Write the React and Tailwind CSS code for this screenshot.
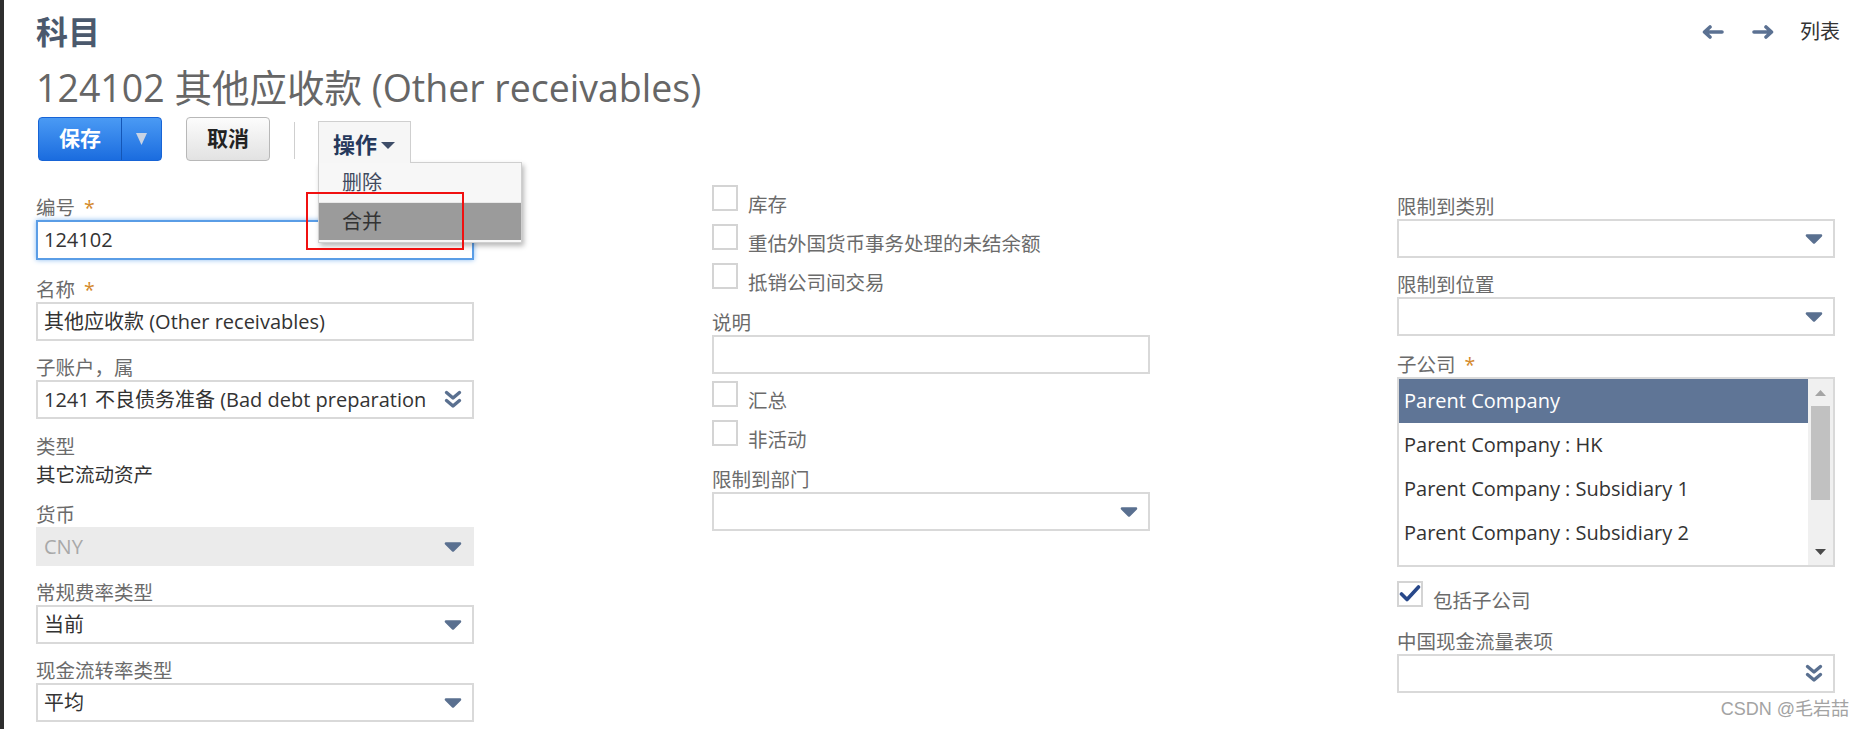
import React from 'react'

const FONT = "font-['Open_Sans','Noto_Sans_CJK_SC',sans-serif]"

function Caret() {
  return (
    <svg width="18" height="10" viewBox="0 0 18 10" className="shrink-0">
      <path d="M2 1.5 H16 L9 8.5 Z" fill="#5a7090" stroke="#5a7090" strokeWidth="2.5" strokeLinejoin="round" />
    </svg>
  )
}

function DoubleChevron() {
  return (
    <svg width="18" height="19" viewBox="0 0 18 19" className="shrink-0">
      <path d="M2.5 2.5 L9 8 L15.5 2.5 M2.5 10.5 L9 16 L15.5 10.5" fill="none" stroke="#5a7090" strokeWidth="3.4" strokeLinecap="round" strokeLinejoin="round" />
    </svg>
  )
}

function Arrow({ dir }) {
  const d = dir === 'left' ? 'M8 2 L2.5 7 L8 12 M3 7 H20' : 'M14 2 L19.5 7 L14 12 M2 7 H19'
  return (
    <svg width="22" height="14" viewBox="0 0 22 14">
      <path d={d} fill="none" stroke="#5b7192" strokeWidth="3.6" strokeLinecap="round" strokeLinejoin="round" />
    </svg>
  )
}

function Label({ children, required }) {
  return (
    <div className="h-[24px] leading-[24px] text-[19.5px] text-[#6b6b6b] whitespace-nowrap">
      {children}
      {required && <span className="ml-[9px] text-[#d4892c]">*</span>}
    </div>
  )
}

function TextInput({ value, focused }) {
  return (
    <div
      className={
        focused
          ? 'h-[40px] w-[438px] flex items-center pl-[6px] border-2 border-[#5a9de6] shadow-[0_0_5px_#8bbcf0] bg-white text-[20px] text-[#333]'
          : 'h-[39px] w-[438px] flex items-center pl-[6px] border-2 border-[#d9d9d9] bg-white text-[20px] text-[#333]'
      }
    >
      {value}
    </div>
  )
}

function Select({ value, disabled, double }) {
  return (
    <div
      className={
        disabled
          ? 'h-[39px] w-[438px] flex items-center pl-[6px] pr-[10px] border-2 border-[#ebebeb] bg-[#ebebeb] text-[20px] text-[#a8a8a8]'
          : 'h-[39px] w-[438px] flex items-center pl-[6px] pr-[10px] border-2 border-[#d9d9d9] bg-white text-[20px] text-[#333]'
      }
    >
      <span className="flex-1 min-w-0 overflow-hidden whitespace-nowrap mr-[18px]">{value}</span>
      {double ? <DoubleChevron /> : <Caret />}
    </div>
  )
}

function Check({ label, checked }) {
  return (
    <div className="h-[39px] flex items-start">
      <div className="w-[26px] h-[26px] border-2 border-[#d4d4d4] bg-white shrink-0">
        {checked && (
          <svg width="22" height="22" viewBox="0 0 22 22">
            <path d="M2.5 11 L8 16.5 L19.5 4" fill="none" stroke="#28488a" strokeWidth="3.6" strokeLinecap="round" strokeLinejoin="round" />
          </svg>
        )}
      </div>
      <span className="ml-[10px] mt-[8px] leading-[24px] text-[19.5px] text-[#6b6b6b] whitespace-nowrap">{label}</span>
    </div>
  )
}

function Field({ label, required, children, className = '' }) {
  return (
    <div className={className}>
      <Label required={required}>{label}</Label>
      {children}
    </div>
  )
}

const companies = [
  'Parent Company',
  'Parent Company : HK',
  'Parent Company : Subsidiary 1',
  'Parent Company : Subsidiary 2',
]

function ListBox() {
  return (
    <div className="w-[438px] h-[190px] border-2 border-[#d9d9d9] bg-white flex">
      <div className="flex-1 overflow-hidden">
        {companies.map((c, i) => (
          <div
            key={c}
            className={
              i === 0
                ? 'h-[44px] flex items-center pl-[5px] text-[20px] bg-[#5f7596] text-white whitespace-nowrap'
                : 'h-[44px] flex items-center pl-[5px] text-[20px] text-[#333] whitespace-nowrap'
            }
          >
            {c}
          </div>
        ))}
      </div>
      <div className="w-[25px] bg-[#f0f0f0] flex flex-col items-center">
        <div className="h-[27px] flex items-center justify-center">
          <svg width="11" height="6" viewBox="0 0 11 6"><path d="M0 6 L5.5 0 L11 6 Z" fill="#a5a5a5" /></svg>
        </div>
        <div className="w-[19px] h-[94px] bg-[#c1c1c1]" />
        <div className="flex-1" />
        <div className="h-[27px] flex items-center justify-center">
          <svg width="11" height="6" viewBox="0 0 11 6"><path d="M0 0 L11 0 L5.5 6 Z" fill="#4a4a4a" /></svg>
        </div>
      </div>
    </div>
  )
}

export default function App() {
  return (
    <div className={`relative w-[1864px] h-[729px] bg-white overflow-hidden flex ${FONT}`}>
      <div className="w-[4px] h-full bg-[#2e2e2e] shrink-0" />

      <div className="flex-1 pl-[32px]">
        {/* header */}
        <div className="pt-[12px] pr-[24px] flex items-center justify-between">
          <div className="text-[32px] leading-[40px] font-bold text-[#4b596d]">科目</div>
          <div className="flex items-center">
            <Arrow dir="left" />
            <div className="w-[28px]" />
            <Arrow dir="right" />
            <span className="ml-[26px] text-[20px] text-[#333]">列表</span>
          </div>
        </div>

        <div className="mt-[14px] text-[37.5px] leading-[44px] text-[#666]">124102 其他应收款 (Other receivables)</div>

        {/* buttons */}
        <div className="mt-[7px] ml-[2px] h-[44px] flex items-start">
          <div className="h-[44px] flex rounded-[4px] border border-[#1764d6] bg-gradient-to-b from-[#4a9af4] to-[#1a6cdf] overflow-hidden">
            <div className="w-[82px] flex items-center justify-center text-white font-bold text-[21px]">保存</div>
            <div className="w-[40px] border-l border-[#1456b6] flex items-center justify-center">
              <svg width="11" height="12" viewBox="0 0 11 12"><path d="M0 0 H11 L5.5 12 Z" fill="#c8d3e4" /></svg>
            </div>
          </div>
          <div className="ml-[24px] w-[84px] h-[44px] rounded-[4px] border border-[#b8b8b8] bg-gradient-to-b from-[#fcfcfc] to-[#e2e2e2] flex items-center justify-center font-bold text-[21px] text-[#222]">
            取消
          </div>
          <div className="ml-[24px] mt-[5px] w-px h-[37px] bg-[#cfcfcf]" />
          <div className="relative ml-[23px] mt-[4px]">
            <div className="relative z-10 h-[42px] w-[93px] border border-b-0 border-[#cfcfcf] bg-[#f6f6f6] flex items-center pl-[14px] pt-[3px]">
              <span className="font-bold text-[22px] text-[#26395c]">操作</span>
              <svg width="14" height="7" viewBox="0 0 14 7" className="ml-[4px] mt-[2px]"><path d="M0 0 H14 L7 7 Z" fill="#3e4d68" /></svg>
            </div>
            <div className="absolute left-0 top-[41px] w-[204px] pb-[2px] border border-[#cfcfcf] bg-[#f7f7f7] shadow-[2px_3px_5px_rgba(0,0,0,0.28)]">
              <div className="h-[39px] flex items-center pl-[23px] text-[20px] text-[#3f4a5e]">删除</div>
              <div className="h-[38px] flex items-center pl-[23px] text-[20px] text-[#333] bg-[#9b9b9b] border-t border-[#e8e8e8]">合并</div>
            </div>
          </div>
        </div>

        {/* form */}
        <div className="mt-[24px] flex items-start">
          <div className="w-[676px] pt-[11px] shrink-0">
            <Field label="编号" required className="mb-[18px]">
              <TextInput value="124102" focused />
            </Field>
            <Field label="名称" required className="mb-[15px]">
              <TextInput value="其他应收款 (Other receivables)" />
            </Field>
            <Field label="子账户，属" className="mb-[16px]">
              <Select value="1241 不良债务准备 (Bad debt preparation)" double />
            </Field>
            <div className="mb-[16px]">
              <Label>类型</Label>
              <div className="mt-[4px] h-[24px] leading-[24px] text-[19.5px] text-[#333]">其它流动资产</div>
            </div>
            <Field label="货币" className="mb-[15px]">
              <Select value="CNY" disabled />
            </Field>
            <Field label="常规费率类型" className="mb-[15px]">
              <Select value="当前" />
            </Field>
            <Field label="现金流转率类型">
              <Select value="平均" />
            </Field>
          </div>

          <div className="w-[685px] shrink-0">
            <Check label="库存" />
            <Check label="重估外国货币事务处理的未结余额" />
            <Check label="抵销公司间交易" />
            <Field label="说明" className="mt-[9px]">
              <TextInput value="" />
            </Field>
            <div className="mt-[7px]">
              <Check label="汇总" />
              <Check label="非活动" />
            </div>
            <Field label="限制到部门" className="mt-[9px]">
              <Select value="" />
            </Field>
          </div>

          <div className="w-[438px] pt-[10px] shrink-0">
            <Field label="限制到类别" className="mb-[15px]">
              <Select value="" />
            </Field>
            <Field label="限制到位置" className="mb-[17px]">
              <Select value="" />
            </Field>
            <Field label="子公司" required>
              <ListBox />
            </Field>
            <div className="mt-[14px]">
              <Check label="包括子公司" checked />
            </div>
            <Field label="中国现金流量表项" className="mt-[10px]">
              <Select value="" double />
            </Field>
          </div>
        </div>
      </div>

      {/* annotation box */}
      <div className="absolute left-[306px] top-[192px] w-[158px] h-[58px] border-2 border-[#f01010] z-20" />

      {/* watermark */}
      <div className="absolute right-[15px] top-[697px] text-[18px] leading-[24px] text-[#a3a3a3] font-['Liberation_Sans','Noto_Sans_CJK_SC',sans-serif]">
        CSDN @毛岩喆
      </div>
    </div>
  )
}
